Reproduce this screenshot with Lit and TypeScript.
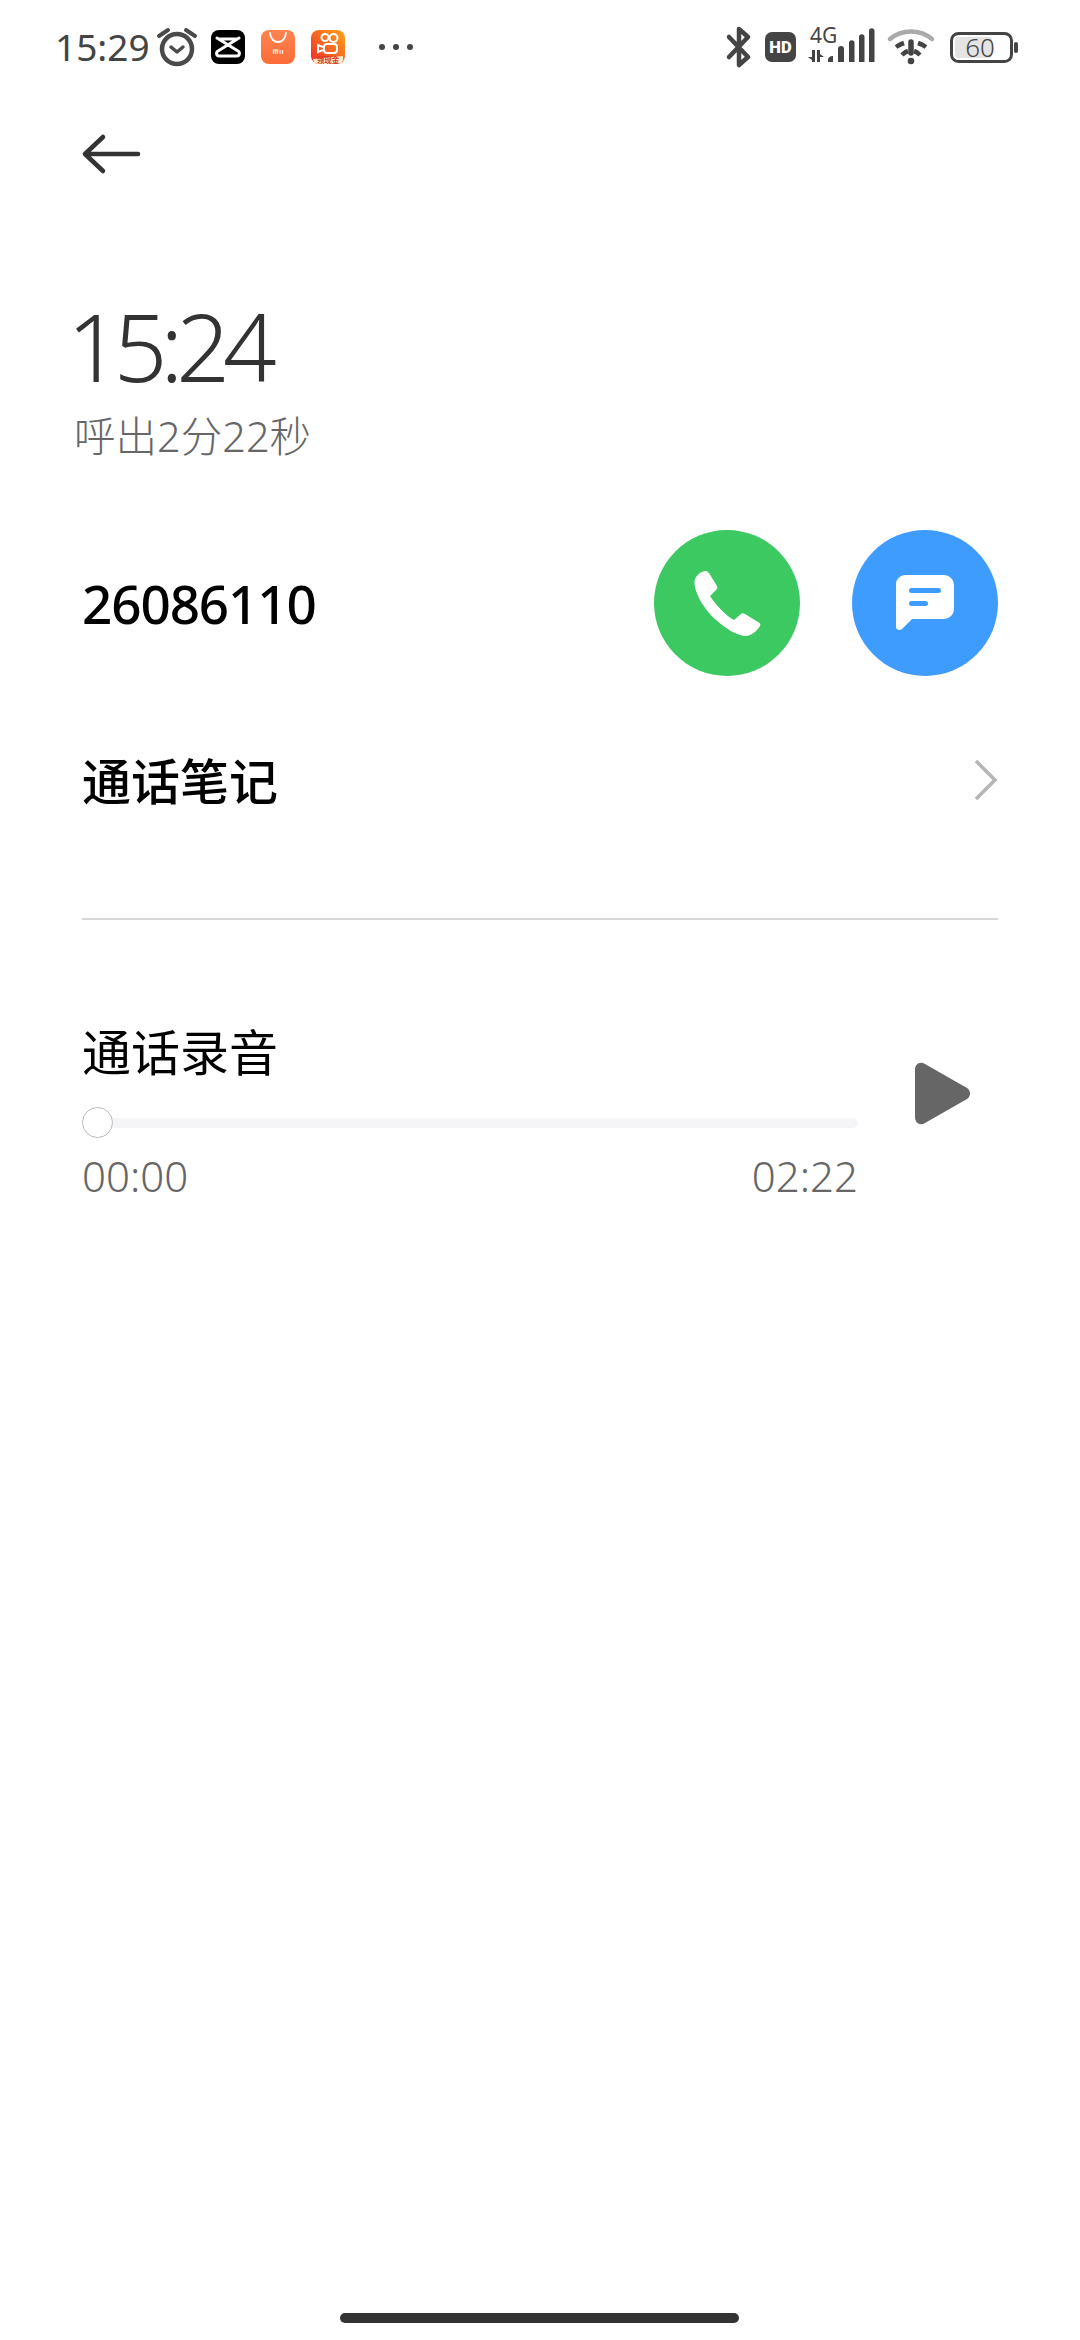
import { LitElement, html, css } from "lit";
import { customElement } from "lit/decorators.js";

@customElement("app-root")
export class AppRoot extends LitElement {
  static styles = css`
    :host { display: block; width: 1080px; height: 2340px; background: #fff; font-family: "Noto Sans", "Noto Sans CJK SC", sans-serif; position: relative; overflow: hidden; }
    svg { overflow: visible; }
    .status { height: 94px; display: flex; align-items: center; padding: 0 61px 0 55px; justify-content: space-between; box-sizing: border-box; }
    .left, .right { display: flex; align-items: center; }
    .clock { font-size: 37px; font-weight: 400; color: #444; width: 101px; line-height: 44px; }
    .alarm { margin-right: 13px; }
    .app { margin-right: 16px; display: block; }
    .dots { margin-left: 17px; }
    .right svg { display: block; }
    .m13 { margin-left: 13px; }
    .m12 { margin-left: 12px; }
    .m14 { margin-left: 14px; }
    .back { display: block; margin: 0 0 0 80px; }
    .header { height: 120px; display: flex; align-items: center; }
    .when { padding-left: 75px; margin-top: 82px; }
    .time { font-size: 94px; line-height: 100px; font-weight: 300; color: #333; letter-spacing: -7px; margin-left: -8px; }
    .sub { font-size: 41.5px; font-weight: 300; line-height: 56px; color: #666; margin: 12px 0 0 -1px; }
    .row { display: flex; align-items: center; justify-content: space-between; padding: 0 82px; }
    .number-row { margin-top: 66px; }
    .number { font-size: 53px; font-weight: 500; color: #000; letter-spacing: -1.1px; }
    .actions { display: flex; gap: 52px; }
    .circle { width: 146px; height: 146px; border-radius: 50%; display: flex; align-items: center; justify-content: center; }
    .green { background: #3dc962; }
    .blue { background: #3f9cff; }
    .notes { margin-top: 69px; height: 70px; }
    .notes-t { font-size: 49px; font-weight: 500; color: #000; padding-bottom: 4px; }
    .divider { height: 2px; background: #d8d8d8; margin: 103px 82px 0; }
    .rec { display: flex; padding: 0 82px; margin-top: 97px; justify-content: space-between; }
    .rec-main { width: 776px; }
    .rec-t { font-size: 49px; line-height: 70px; color: #000; }
    .slider { height: 32px; margin-top: 20px; display: flex; align-items: center; position: relative; }
    .track { flex: 1; height: 10px; background: #f5f5f8; border-radius: 5px; margin-left: 2px; }
    .knob { position: absolute; left: 0; top: 0; width: 31px; height: 31px; border-radius: 50%; background: #fff; border: 1px solid #bbb; box-sizing: border-box; }
    .times { display: flex; justify-content: space-between; font-size: 42px; color: #666; line-height: 52px; margin-top: 11px; font-weight: 300; }
    .play { margin: 45px 26px 0 0; display: block; }
    .home { position: absolute; left: 340px; top: 2313px; width: 399px; height: 10px; border-radius: 5px; background: #333; }
  `;

  render() {
    return html`
      <div class="status">
        <div class="left">
          <span class="clock">15:29</span>
          <svg class="alarm" width="42" height="40" viewBox="0 0 42 40" fill="none" stroke="#4a4a4a"><circle cx="21" cy="22" r="15" stroke-width="4.5"/><path d="M15 20l6 5 6-5" stroke-width="3.5" stroke-linecap="round" stroke-linejoin="round"/><path d="M3 9l9-6M39 9l-9-6" stroke-width="4" stroke-linecap="round"/></svg>
          <svg class="app" width="34" height="34" viewBox="0 0 34 34"><rect width="34" height="34" rx="8" fill="#000"/><path d="M6 8l21 13c2 1 2 5-1 5H8c-3 0-3-4-1-5l21-13M9 9h16" fill="none" stroke="#fff" stroke-width="3" stroke-linecap="round" stroke-linejoin="round"/></svg>
          <svg class="app" width="34" height="34" viewBox="0 0 34 34"><defs><linearGradient id="mi" x1="0" y1="0" x2="0" y2="1"><stop offset="0" stop-color="#ff8450"/><stop offset="1" stop-color="#fb6c38"/></linearGradient></defs><rect width="34" height="34" rx="8" fill="url(#mi)"/><path d="M9 3c1 12 15 12 16 0" fill="none" stroke="#fff" stroke-width="1.8" stroke-linecap="round"/><path d="M12.500 24v-4h4v4M14.500 20v4M19 20v4M21.500 20v4" fill="none" stroke="#fde6d8" stroke-width="1.3"/></svg>
          <svg class="app" width="34" height="34" viewBox="0 0 34 34"><defs><linearGradient id="ks" x1="0" y1="1" x2="1" y2="0"><stop offset="0" stop-color="#ee2a2a"/><stop offset="1" stop-color="#ffa319"/></linearGradient></defs><rect width="34" height="34" rx="8" fill="url(#ks)"/><circle cx="14" cy="7.500" r="3.500" fill="none" stroke="#fff" stroke-width="2"/><circle cx="22.500" cy="8" r="4" fill="none" stroke="#fff" stroke-width="2"/><rect x="13" y="14" width="13" height="9" rx="3" fill="none" stroke="#fff" stroke-width="2"/><path d="M12 17l-5-2v7l5-2" fill="none" stroke="#fff" stroke-width="2"/><path d="M2 29l30-3v3a5 5 0 0 1-5 5H7a5 5 0 0 1-5-5z" fill="#ffe9c9"/><text x="17" y="33" font-size="7.500" text-anchor="middle" fill="#d23a2a" font-family="'Noto Sans CJK SC'" font-weight="700">领现金</text></svg>
          <svg class="dots" width="36" height="8" viewBox="0 0 36 8" fill="#444"><circle cx="4" cy="4" r="3"/><circle cx="18" cy="4" r="3"/><circle cx="32" cy="4" r="3"/></svg>
        </div>
        <div class="right">
          <svg width="26" height="42" viewBox="0 0 26 42" fill="none" stroke="#444" stroke-width="4.500" stroke-linecap="round" stroke-linejoin="round"><path d="M3 11l19 20-9 8V3l9 8L3 31"/></svg>
          <svg class="m13" width="31" height="30" viewBox="0 0 31 30"><rect width="31" height="30" rx="7" fill="#444"/><text x="15.500" y="21" font-size="16.500" font-weight="900" text-anchor="middle" fill="#fff" font-family="Roboto">HD</text></svg>
          <svg class="m12" width="68" height="46" viewBox="0 0 68 46" fill="#444"><text x="2" y="19" font-size="21" font-family="'Noto Sans'">4G</text><path d="M4 26h3v12H4v-2l-4-3h4zM9 26h3v4l4 3h-4v5H9zM20 35a5 5 0 0 1 5-3v6h-5zM30 25a3 3 0 0 1 6 0v13h-6zM41 19a2.700 2.700 0 0 1 5.500 0v19H41zM51 13a2.700 2.700 0 0 1 5.500 0v25H51zM61 7a2.700 2.700 0 0 1 5.500 0v31H61z"/></svg>
          <svg class="m12" width="47" height="34" viewBox="0 0 47 34" fill="none"><path d="M2 9C14 -1 32 -1 44 9" stroke="#aaa" stroke-width="4.500" stroke-linecap="round"/><path d="M8 17c3-2 5-3 8-4M38 17c-3-2-5-3-8-4M14 25c1-1 3-3 6-4M32 25c-1-1-3-3-6-4" stroke="#444" stroke-width="4.500"/><path d="M23 12v11" stroke="#444" stroke-width="5.500" stroke-linecap="round"/><circle cx="23" cy="31" r="3.300" fill="#444"/></svg>
          <svg class="m14" width="70" height="32" viewBox="0 0 70 32"><rect x="2.500" y="2.500" width="60" height="28" rx="7" fill="#fff" stroke="#444" stroke-width="3"/><rect x="6" y="6" width="37" height="21" rx="3" fill="#e4e4e4"/><text x="31" y="25.500" font-size="26" text-anchor="middle" fill="#444" font-family="'Noto Sans'" font-weight="300">60</text><rect x="65" y="11" width="4" height="11" rx="2" fill="#444"/></svg>
        </div>
      </div>
      <div class="header">
        <svg class="back" width="62" height="44" viewBox="0 0 62 44" fill="none" stroke="#333" stroke-width="4.500" stroke-linecap="round" stroke-linejoin="round"><path d="M23 5L5 22l18 17M5 22h53"/></svg>
      </div>
      <div class="when">
        <div class="time">15:24</div>
        <div class="sub">呼出2分22秒</div>
      </div>
      <div class="row number-row">
        <div class="number">26086110</div>
        <div class="actions">
          <div class="circle green">
            <svg width="67" height="67" viewBox="0 0 67 67" fill="#fff"><path d="M9 1.500C5 3 0 7 .5 14 2 27 12 41 22 50c10 9 22 16 30 16 5 0 12-6 14-10 1-2 0-3-2-4l-13-8c-2-1-3-1-4 0l-7 6c-9-5-18-15-24-24l6-6c1.500-1.500 1.500-2.500 1-4L15 3C13 .5 11 .5 9 1.500z"/></svg>
          </div>
          <div class="circle blue">
            <svg width="58" height="56" viewBox="0 0 58 56"><path d="M9 0h39a10 10 0 0 1 10 10v24a10 10 0 0 1-10 10H16L6 54c-2 2-6 1-6-2V9a9 9 0 0 1 9-9z" fill="#fff"/><path d="M15.500 15.500h27M15.500 28.500h14" fill="none" stroke="#3f9cff" stroke-width="5" stroke-linecap="round"/></svg>
          </div>
        </div>
      </div>
      <div class="row notes">
        <div class="notes-t">通话笔记</div>
        <svg width="24" height="42" viewBox="0 0 24 42" fill="none" stroke="#b5b5b5" stroke-width="3.500"><path d="M2 2l19 19L2 40"/></svg>
      </div>
      <div class="divider"></div>
      <div class="rec">
        <div class="rec-main">
          <div class="rec-t">通话录音</div>
          <div class="slider"><div class="track"></div><div class="knob"></div></div>
          <div class="times"><span>00:00</span><span>02:22</span></div>
        </div>
        <svg class="play" width="57" height="64" viewBox="0 0 57 64" fill="#666"><path d="M0 8C0 2 5-1 10 2l42 24c4 2.500 4 8.500 0 11L10 61c-5 3-10 0-10-6z"/></svg>
      </div>
      <div class="home"></div>
    `;
  }
}
